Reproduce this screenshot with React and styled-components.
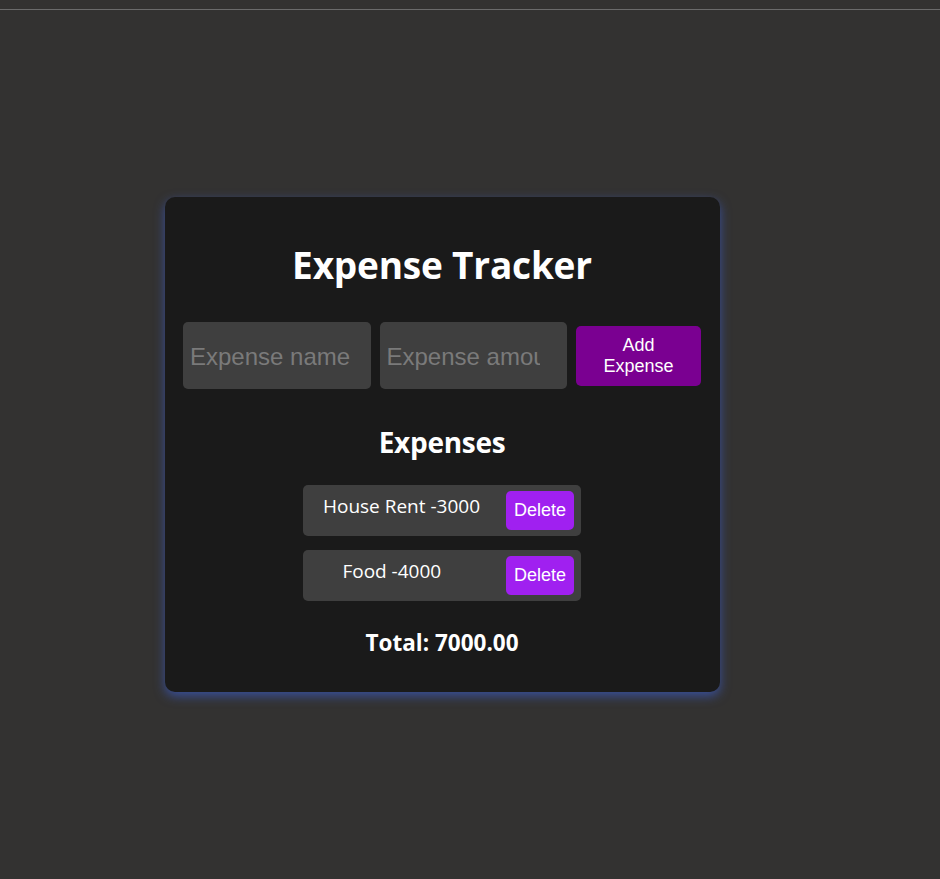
import React, { useState } from 'react';
import styled, { createGlobalStyle } from 'styled-components';

const GlobalStyle = createGlobalStyle`
  html, body {
    margin: 0;
    padding: 0;
    background: #333231;
  }
  body {
    font-family: "Open Sans", "Noto Sans", sans-serif;
    color: #ffffff;
  }
`;

const TopRule = styled.div`
  height: 9px;
  border-bottom: 1px solid #6b6b6b;
`;

const Page = styled.div`
  display: flex;
  justify-content: center;
  align-items: center;
  min-height: 869px;
  padding-right: 55px;
`;

const Card = styled.div`
  width: 555px;
  box-sizing: border-box;
  padding: 44px 19px 35px 18px;
  background: #1a1a1a;
  border-radius: 10px;
  box-shadow: 0 4px 11px rgba(60, 95, 210, 0.65);
  display: flex;
  flex-direction: column;
  align-items: center;
`;

const Title = styled.h1`
  margin: 0 0 33px;
  font-size: 37px;
  font-weight: 700;
  line-height: 1.3;
  letter-spacing: -0.2px;
`;

const Form = styled.div`
  display: grid;
  grid-template-columns: minmax(0, 1fr) minmax(0, 1fr) 125px;
  align-items: center;
  gap: 9px;
  width: 100%;
`;

const Input = styled.input`
  width: 100%;
  height: 67px;
  box-sizing: border-box;
  padding: 2px ${p => (p.type === 'number' ? '12px' : '7px')} 0 7px;
  border: none;
  border-radius: 5px;
  background: #3f3f3f;
  color: #ffffff;
  font-family: "Liberation Sans", Arial, sans-serif;
  font-size: 24px;
  outline: none;

  &::placeholder {
    color: #7a7a7a;
  }
`;

const Button = styled.button`
  border: none;
  border-radius: 5px;
  color: #ffffff;
  font-family: "Liberation Sans", Arial, sans-serif;
  font-size: 18px;
  line-height: 21px;
  cursor: pointer;
  background: ${p => (p.$variant === 'delete' ? '#a020f0' : '#7a0091')};
  padding: ${p => (p.$variant === 'delete' ? '9px 8px' : '9px 16px')};
  width: ${p => (p.$variant === 'delete' ? 'auto' : '125px')};
  flex-shrink: 0;
`;

const SubTitle = styled.h2`
  margin: 35px 0 24px;
  font-size: 28px;
  font-weight: 700;
  line-height: 1.3;
  letter-spacing: -0.3px;
`;

const List = styled.ul`
  list-style: none;
  margin: 0;
  padding: 0;
  display: flex;
  flex-direction: column;
  gap: 14px;
`;

const Item = styled.li`
  width: 278px;
  box-sizing: border-box;
  display: flex;
  align-items: center;
  padding: 6px 7px;
  background: #3f3f3f;
  border-radius: 5px;
`;

const ItemText = styled.span`
  flex: 1;
  display: flex;
  justify-content: space-evenly;
  font-size: 19px;
  padding-bottom: 8px;
  white-space: pre;

  &::after {
    content: '';
  }
`;

const Total = styled.h3`
  margin: 27px 0 0;
  font-size: 22.5px;
  font-weight: 700;
  line-height: 1.3;
`;

export default function App() {
  const [expenses, setExpenses] = useState([
    { id: 1, name: 'House Rent', amount: 3000 },
    { id: 2, name: 'Food', amount: 4000 },
  ]);

  const total = expenses.reduce((sum, e) => sum + e.amount, 0);

  return (
    <>
      <GlobalStyle />
      <TopRule />
      <Page>
        <Card>
          <Title>Expense Tracker</Title>
          <Form>
            <Input placeholder="Expense name" />
            <Input placeholder="Expense amount" type="number" />
            <Button>Add Expense</Button>
          </Form>
          <SubTitle>Expenses</SubTitle>
          <List>
            {expenses.map(e => (
              <Item key={e.id}>
                <ItemText>
                  <span>{`${e.name} -${e.amount}`}</span>
                </ItemText>
                <Button
                  $variant="delete"
                  onClick={() => setExpenses(expenses.filter(x => x.id !== e.id))}
                >
                  Delete
                </Button>
              </Item>
            ))}
          </List>
          <Total>Total: {total.toFixed(2)}</Total>
        </Card>
      </Page>
    </>
  );
}
